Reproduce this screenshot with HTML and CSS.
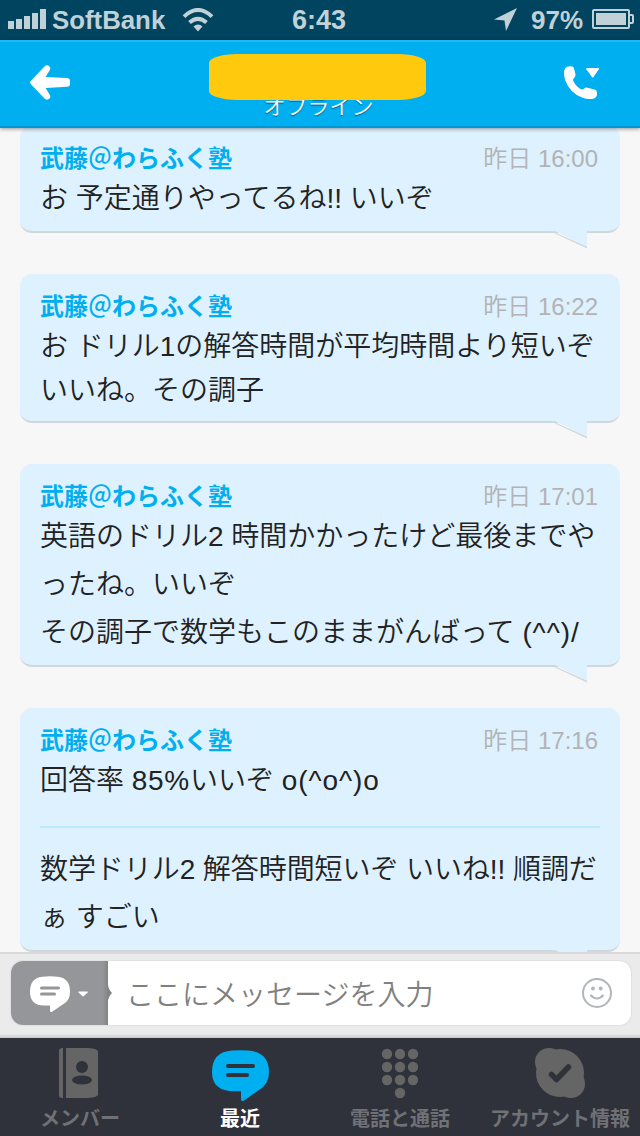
FILE: index.html
```html
<!DOCTYPE html>
<html lang="ja">
<head>
<meta charset="utf-8">
<title>チャット</title>
<link rel="stylesheet" href="styles.css">
</head>
<body>
<div class="app">
  <div class="status">
    <svg class="signal" width="38" height="20" viewBox="0 0 38 20"><path d="M0 12h6v8H0zM8 10h6v10H8zM16 7h6v13h-6zM24 4h6v16h-6zM32 0h6v20h-6z"/></svg>
    <span class="carrier">SoftBank</span>
    <svg class="wifi" width="32" height="24" viewBox="0 0 32 24"><g fill="none" stroke="#c0d1d8" stroke-width="4"><path d="M2 8.600Q16-4.600 30 8.600"/><path d="M7.500 14.600Q16 7 24.500 14.600"/></g><path d="M11.500 18.500Q16 14.500 20.500 18.500L16 23.500z"/></svg>
    <span class="clock">6:43</span>
    <svg class="location" width="24" height="24" viewBox="0 0 24 24"><path d="M23 0L12 23L10.500 12.500L0 11.500z"/></svg>
    <span class="percent">97%</span>
    <svg class="battery" width="42" height="20" viewBox="0 0 42 20"><path fill="none" stroke="#c0d1d8" stroke-width="2" d="M2 1h34q1 0 1 1v16q0 1-1 1H2q-1 0-1-1V2q0-1 1-1zM38 6h2q1 0 1 1v6q0 1-1 1h-2"/><path d="M4 4h30v12H4z"/></svg>
  </div>

  <header class="navbar">
    <svg class="back" width="40" height="35" viewBox="0 0 40 35"><path d="M.7 16L14.500 1.500Q17-.9 19.500 1.400Q21 3 19.700 5.300L15.600 12L37 13.100Q40 13.400 40 16v3q0 2.500-3 2.800L15.600 23l4.100 6.700Q21 32 19.500 33.500Q17 35.800 14.500 33.500L.7 19q-1.400-1.500 0-3z"/></svg>
    <div class="title">
      <div class="name-cover"></div>
      <div class="presence">オフライン</div>
    </div>
    <svg class="call" width="36" height="34" viewBox="0 0 36 34"><path d="M3 .8Q6-.3 8.500.6Q9.800 1.200 10.300 3.500L11.500 8.500Q11.800 10.300 10.400 11.500Q8.600 13 9.300 15Q12 20.500 17 23.200Q18.700 24 20.200 22.600Q21.400 21.300 23.500 21.700L30.500 23.400Q33 24 33 26.500V29Q32.500 31.500 30 32.500Q24.500 34 18 31.500Q6 27 1.300 14.500Q-.4 9 .2 4.500Q.8 1.800 3 .8z"/><path d="M23 2h11.500q1 .2.300 1.300L29.500 11q-.8 1-1.600 0L22.300 3.300Q21.700 2.200 23 2z"/></svg>
  </header>

  <main class="chat">
    <article class="bubble">
      <div class="meta"><span class="author">武藤<span class="at">＠</span>わらふく塾</span><time>昨日 16:00</time></div>
      <p>お 予定通りやってるね!! いいぞ</p>
      <svg class="tail" width="34" height="18" viewBox="0 0 34 18"><path class="edge" d="M0 1L33 15.500V17.500L0 2z"/><path class="fill" d="M1 0H33V15.500L1 0z"/></svg>
    </article>
    <article class="bubble">
      <div class="meta"><span class="author">武藤<span class="at">＠</span>わらふく塾</span><time>昨日 16:22</time></div>
      <p>お ドリル1の解答時間が平均時間より短いぞ<br>いいね。その調子</p>
      <svg class="tail" width="34" height="18" viewBox="0 0 34 18"><path class="edge" d="M0 1L33 15.500V17.500L0 2z"/><path class="fill" d="M1 0H33V15.500L1 0z"/></svg>
    </article>
    <article class="bubble roomy">
      <div class="meta"><span class="author">武藤<span class="at">＠</span>わらふく塾</span><time>昨日 17:01</time></div>
      <p>英語のドリル2 時間かかったけど最後までや<br>ったね。いいぞ<br>その調子で数学もこのままがんばって <span class="face">(^^)/</span></p>
      <svg class="tail" width="34" height="18" viewBox="0 0 34 18"><path class="edge" d="M0 1L33 15.500V17.500L0 2z"/><path class="fill" d="M1 0H33V15.500L1 0z"/></svg>
    </article>
    <article class="bubble roomy last">
      <div class="meta"><span class="author">武藤<span class="at">＠</span>わらふく塾</span><time>昨日 17:16</time></div>
      <p>回答率 <span class="rate">85%</span>いいぞ <span class="face">o(^o^)o</span></p>
      <hr>
      <p><span class="snug">数学ドリル2 解答時間短いぞ いいね!! 順調だ</span><br>ぁ すごい</p>
      <svg class="tail" width="34" height="18" viewBox="0 0 34 18"><path class="fill" d="M1 0H33V15.500L1 0z"/></svg>
    </article>
  </main>

  <section class="composer">
    <div class="field">
      <div class="mode">
        <svg width="62" height="38" viewBox="0 0 62 38"><path d="M12.500.8Q20-.2 27.500.8Q40 2 40 15.500Q40 24.500 33.500 28L22.500 35.600Q20 37 20 34.500V29.500H14Q0 29.500 0 15.500Q0 2 12.500.8z"/><path class="groove" d="M11.500 12H28.500M11.500 18H24.500"/><path d="M49 15.500H57.300q1.100 0 .3.900L54 20q-.9.700-1.800 0L48.600 16.400q-.8-.9.400-.9z"/></svg>
        <svg class="notch" width="4" height="18" viewBox="0 0 4 18"><path d="M0 0Q0 5 4 9Q0 13 0 18z"/></svg>
      </div>
      <span class="placeholder">ここにメッセージを入力</span>
      <svg class="smile" width="30" height="30" viewBox="0 0 30 30"><circle cx="15" cy="15" r="14" /><path d="M8.500 17Q15 24 21.500 17"/><circle class="eye" cx="11" cy="10.500" r="1.900"/><circle class="eye" cx="18.700" cy="10.500" r="1.900"/></svg>
    </div>
  </section>

  <nav class="tabs">
    <div class="tab">
      <svg width="64" height="54" viewBox="0 0 64 54"><path d="M13.500 0H15v50h-1.500Q11 49.500 11 47.500V2.500Q11 .5 13.500 0zM18 0H40Q50 .7 50 3.500V46.500Q50 49.300 40 50H18z"/><circle class="hole" cx="34" cy="19" r="6"/><ellipse class="hole" cx="34" cy="32" rx="10" ry="4.500"/></svg>
      <span>メンバー</span>
    </div>
    <div class="tab active">
      <svg width="64" height="54" viewBox="0 0 64 54"><path d="M24 2.600Q32 1.700 40 2.600Q61 4 61 24Q61 36 51 42L36 52.500Q33 54 33 51V43.200H28Q4 44 4 24Q4 4 24 2.600z"/><path class="groove" d="M20 18H45M20 27H39"/></svg>
      <span>最近</span>
    </div>
    <div class="tab">
      <svg width="64" height="54" viewBox="0 0 64 54"><circle cx="19" cy="6" r="5.200"/><circle cx="32" cy="6" r="5.200"/><circle cx="45" cy="6" r="5.200"/><circle cx="19" cy="19" r="5.200"/><circle cx="32" cy="19" r="5.200"/><circle cx="45" cy="19" r="5.200"/><circle cx="19" cy="32" r="5.200"/><circle cx="32" cy="32" r="5.200"/><circle cx="45" cy="32" r="5.200"/><circle cx="32" cy="45" r="5.200"/></svg>
      <span>電話と通話</span>
    </div>
    <div class="tab">
      <svg width="64" height="54" viewBox="0 0 64 54"><circle cx="32" cy="25" r="24"/><circle cx="21" cy="14" r="14"/><circle cx="43" cy="36" r="14"/><path class="check" d="M23.500 26.500L28.500 31.500L40.500 19"/></svg>
      <span>アカウント情報</span>
    </div>
  </nav>
</div>
</body>
</html>
```
FILE: styles.css
```css
* { box-sizing: border-box; }
body {
  margin: 0;
  font-family: "Liberation Sans", "Noto Sans CJK JP", sans-serif;
}
svg { display: block; flex: none; }
.app {
  width: 640px;
  height: 1136px;
  display: flex;
  flex-direction: column;
  overflow: hidden;
  background: #f7f7f7;
}

.status {
  height: 40px;
  flex: none;
  display: flex;
  align-items: center;
  padding: 0 6px 0 8px;
  background: #00445f;
  border-bottom: 1px solid #003a52;
  color: #c0d1d8;
  fill: #c0d1d8;
  font-weight: bold;
  font-size: 26px;
  line-height: 40px;
}
.signal { margin-top: -1px; }
.carrier { width: 114px; margin-left: 6px; font-size: 25.800px; }
.wifi { margin-left: 16px; }
.clock { margin-left: 78px; width: 54px; font-size: 27px; }
.location { margin-left: 148px; }
.percent { margin-left: 13px; width: 54px; }
.battery { margin-left: 7px; margin-top: -1px; }

.navbar {
  position: relative;
  z-index: 2;
  height: 88px;
  flex: none;
  display: flex;
  align-items: flex-start;
  padding: 12px 40px 0 30px;
  background: #00aff0;
  border-top: 2px solid #1fb8f2;
  border-bottom: 2px solid #0098d4;
  box-shadow: 0 1px 4px rgba(0, 0, 0, .4);
  fill: #fff;
}
.back { margin-top: 11px; }
.call { margin: 12px 0 0 auto; }
.title { width: 217px; margin-left: 139px; }
.name-cover {
  position: relative;
  z-index: 1;
  height: 46px;
  background: #ffc90e;
  border-radius: 28px / 9px;
}
.presence {
  margin-top: -8px;
  padding-left: 2px;
  text-align: center;
  color: #fff;
  font-size: 22px;
  line-height: 30px;
  font-weight: 350;
  text-shadow: 0 1px 1px rgba(0, 50, 80, .7);
}

.chat {
  flex: 1;
  min-height: 0;
  overflow: hidden;
  display: flex;
  flex-direction: column;
  gap: 41px;
  padding: 0 20px;
}
.bubble {
  position: relative;
  flex: none;
  padding: 17px 20px 0;
  height: 149px;
  background: #def1ff;
  border-bottom: 2px solid #d1d8dc;
  border-radius: 12px;
}
.bubble:first-child { height: 107px; margin-top: -2px; }
.roomy { height: 203px; }
.last { height: 244px; }
.meta {
  display: flex;
  justify-content: space-between;
  padding-right: 2px;
  font-size: 24px;
  line-height: 32px;
}
.author { color: #00aff0; font-weight: bold; }
.author .at { font-weight: 500; }
time { color: #b3b3b3; font-weight: 350; }
.bubble p {
  margin: 2px 0 0;
  color: #222;
  font-size: 28px;
  line-height: 44px;
  font-weight: 350;
  white-space: nowrap;
}
.bubble.roomy p { line-height: 48px; margin-top: 0; }
.face { letter-spacing: .9px; }
.rate { letter-spacing: .7px; }
.snug { letter-spacing: -.07px; }
.bubble hr {
  height: 2px;
  margin: 21px 0 18px;
  border: 0;
  background: #baeafc;
}
.tail { position: absolute; right: 32px; bottom: -18px; }
.tail .fill { fill: #def1ff; }
.tail .edge { fill: #d1d8dc; }

.composer {
  position: relative;
  z-index: 1;
  height: 86px;
  flex: none;
  padding: 7px 9px 0 11px;
  background: linear-gradient(#ebebeb 80px, #c8c8c8 84px);
  border-top: 2px solid #dadada;
}
.field {
  height: 64px;
  display: flex;
  align-items: center;
  background: #fff;
  border-radius: 12px;
  box-shadow: 0 0 1px 1px #e0e0e0;
}
.mode {
  position: relative;
  width: 97px;
  height: 64px;
  padding: 15px 0 0 19px;
  background: linear-gradient(90deg, #95969a 92px, #828387 97px);
  border-radius: 12px 0 0 12px;
  fill: #fff;
}
.mode .groove { stroke: #95969a; stroke-width: 3; stroke-linecap: round; }
.notch { position: absolute; left: 97px; top: 23px; fill: #828387; }
.placeholder {
  flex: 1;
  margin-left: 18px;
  color: #808080;
  font-size: 28px;
  font-weight: 350;
}
.smile { margin-right: 19px; fill: none; stroke: #b0b6ba; stroke-width: 2; }
.smile .eye { fill: #b0b6ba; stroke: none; }

.tabs {
  height: 98px;
  flex: none;
  display: grid;
  grid-template-columns: repeat(4, 1fr);
  background: #2f323a;
}
.tab {
  display: flex;
  flex-direction: column;
  align-items: center;
  gap: 2px;
  padding-top: 10px;
  color: #707176;
  fill: #656565;
  font-size: 20px;
  font-weight: bold;
  line-height: 30px;
  white-space: nowrap;
}
.tab.active { color: #fff; fill: #00aff0; }
.tab .hole { fill: #2f323a; }
.tab .groove { fill: none; stroke: #2f323a; stroke-width: 4; stroke-linecap: round; }
.tab .check { fill: none; stroke: #2f323a; stroke-width: 5.500; stroke-linecap: round; stroke-linejoin: round; }
```
